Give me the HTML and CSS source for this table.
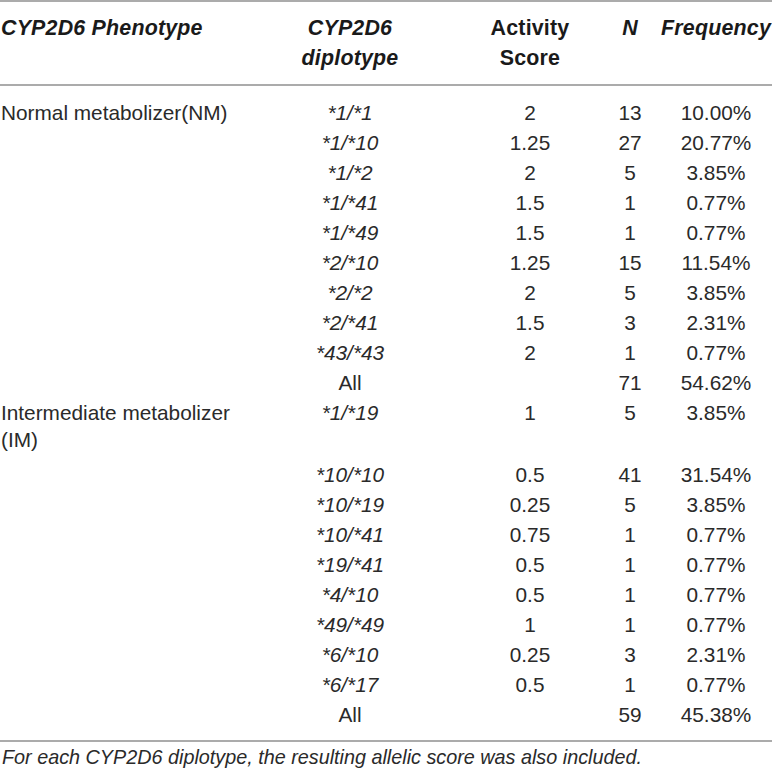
FILE: index.html
```html
<!DOCTYPE html>
<html>
<head>
<meta charset="utf-8">
<link rel="stylesheet" href="styles.css">
</head>
<body>
<table class="tbl">
  <colgroup>
    <col class="c-phen"><col class="c-dip"><col class="c-act"><col class="c-n"><col class="c-freq">
  </colgroup>
  <thead>
    <tr>
      <th class="phen"><i>CYP2D6 Phenotype</i></th>
      <th><i>CYP2D6 diplotype</i></th>
      <th class="act">Activity Score</th>
      <th><i>N</i></th>
      <th><i>Frequency</i></th>
    </tr>
  </thead>
  <tbody>
    <tr class="first"><td class="phen">Normal metabolizer(NM)</td><td class="dip">*1/*1</td><td class="act">2</td><td>13</td><td>10.00%</td></tr>
    <tr><td class="phen"></td><td class="dip">*1/*10</td><td class="act">1.25</td><td>27</td><td>20.77%</td></tr>
    <tr><td class="phen"></td><td class="dip">*1/*2</td><td class="act">2</td><td>5</td><td>3.85%</td></tr>
    <tr><td class="phen"></td><td class="dip">*1/*41</td><td class="act">1.5</td><td>1</td><td>0.77%</td></tr>
    <tr><td class="phen"></td><td class="dip">*1/*49</td><td class="act">1.5</td><td>1</td><td>0.77%</td></tr>
    <tr><td class="phen"></td><td class="dip">*2/*10</td><td class="act">1.25</td><td>15</td><td>11.54%</td></tr>
    <tr><td class="phen"></td><td class="dip">*2/*2</td><td class="act">2</td><td>5</td><td>3.85%</td></tr>
    <tr><td class="phen"></td><td class="dip">*2/*41</td><td class="act">1.5</td><td>3</td><td>2.31%</td></tr>
    <tr><td class="phen"></td><td class="dip">*43/*43</td><td class="act">2</td><td>1</td><td>0.77%</td></tr>
    <tr><td class="phen"></td><td>All</td><td class="act"></td><td>71</td><td>54.62%</td></tr>
    <tr class="two"><td class="phen im">Intermediate metabolizer<br>(IM)</td><td class="dip">*1/*19</td><td class="act">1</td><td>5</td><td>3.85%</td></tr>
    <tr><td class="phen"></td><td class="dip">*10/*10</td><td class="act">0.5</td><td>41</td><td>31.54%</td></tr>
    <tr><td class="phen"></td><td class="dip">*10/*19</td><td class="act">0.25</td><td>5</td><td>3.85%</td></tr>
    <tr><td class="phen"></td><td class="dip">*10/*41</td><td class="act">0.75</td><td>1</td><td>0.77%</td></tr>
    <tr><td class="phen"></td><td class="dip">*19/*41</td><td class="act">0.5</td><td>1</td><td>0.77%</td></tr>
    <tr><td class="phen"></td><td class="dip">*4/*10</td><td class="act">0.5</td><td>1</td><td>0.77%</td></tr>
    <tr><td class="phen"></td><td class="dip">*49/*49</td><td class="act">1</td><td>1</td><td>0.77%</td></tr>
    <tr><td class="phen"></td><td class="dip">*6/*10</td><td class="act">0.25</td><td>3</td><td>2.31%</td></tr>
    <tr><td class="phen"></td><td class="dip">*6/*17</td><td class="act">0.5</td><td>1</td><td>0.77%</td></tr>
    <tr class="last"><td class="phen"></td><td>All</td><td class="act"></td><td>59</td><td>45.38%</td></tr>
  </tbody>
</table>
<p class="note">For each CYP2D6 diplotype, the resulting allelic score was also included.</p>
</body>
</html>
```
FILE: styles.css
```css
html, body {
  margin: 0;
  padding: 0;
  background: #fff;
}
body {
  font-family: "Liberation Sans", Arial, sans-serif;
  color: #2a2a2a;
  width: 772px;
}
.tbl {
  width: 772px;
  border-collapse: collapse;
  table-layout: fixed;
  border-top: 2px solid #ababab;
  border-bottom: 2px solid #ababab;
  font-size: 20.8px;
}
.c-phen { width: 300px; }
.c-dip { width: 100px; }
.c-act { width: 200px; }
.c-n { width: 60px; }
.c-freq { width: 112px; }

thead tr { border-bottom: 2px solid #ababab; }
th {
  font-weight: bold;
  font-size: 21.4px;
  letter-spacing: 0.2px;
  color: #1a1a1a;
  line-height: 30px;
  padding: 11px 0;
  text-align: center;
  vertical-align: top;
}
td {
  line-height: 30px;
  height: 30px;
  padding: 0;
  text-align: center;
  vertical-align: top;
  white-space: nowrap;
}
.phen { text-align: left; padding-left: 1px; }
th.act, td.act { padding-left: 70px; padding-right: 10px; }
.dip { font-style: italic; }
tr.first td { padding-top: 12px; }
tr.last td { padding-bottom: 10px; }
td.im {
  line-height: 27px;
  padding-top: 1px;
  padding-bottom: 7px;
  white-space: normal;
}
.note {
  margin: 0;
  padding: 3px 0 0 2px;
  font-size: 19.8px;
  line-height: 24px;
  font-style: italic;
  color: #2a2a2a;
}
```
